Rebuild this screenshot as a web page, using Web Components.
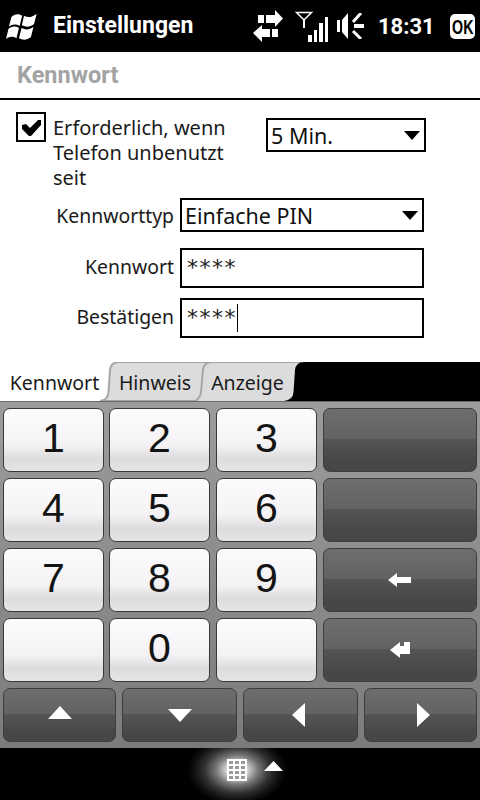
<!DOCTYPE html>
<html lang="de"><head><meta charset="utf-8"><title>Einstellungen</title>
<style>
html,body{margin:0;padding:0;background:#fff}
body{width:480px;height:800px;overflow:hidden;font-family:"Noto Sans","Open Sans","Liberation Sans",sans-serif;display:flex;flex-direction:column}
</style></head><body>
<wm-header></wm-header>
<wm-subhead>Kennwort</wm-subhead>
<wm-form></wm-form>
<wm-tabs></wm-tabs>
<wm-keypad></wm-keypad>
<wm-softbar></wm-softbar>
<script>
function def(name,css,html){
  customElements.define(name,class extends HTMLElement{
    constructor(){super();const s=this.attachShadow({mode:'open'});s.innerHTML='<style>'+css+'</style>'+html;}
  });
}
def('wm-header',`
:host{display:flex;align-items:center;height:52px;background:#000;color:#fff;flex:none}
.flag{margin:2px 0 0 6px;width:31px;height:28px;flex:none}
.t{margin-left:16px;font:700 23px/26px Roboto,sans-serif;flex:1}
.ic{flex:none;display:block}
.time{font:700 22px/26px Roboto,sans-serif;margin:1px 0 0 14px;width:57px;flex:none;white-space:nowrap}
.ok{flex:none;width:25px;height:25px;margin:0 5px 0 15px;border-radius:5px;background:#fff;display:flex;align-items:center;justify-content:center;overflow:hidden}
.ok b{display:block;color:#000;font:700 21px/25px "Liberation Sans",sans-serif;transform:scaleX(.68);white-space:nowrap}
`,`
<svg class="flag" viewBox="2.700 7 24.600 20.500" preserveAspectRatio="none"><g fill="#fff">
<path d="M7 10 C10 7.500 12 7.500 15.500 9 L13.500 16.500 C10.500 15 8 15 5 17Z"/>
<path d="M17 9 C20 10.500 23 10.500 27 7.500 L25 15 C21.500 17.500 19 17.500 15.300 16Z"/>
<path d="M4.700 18.500 C8 16.500 10 16.500 13 18 L11 25.500 C8 24 5.500 24 2.700 26Z"/>
<path d="M15 18 C18.500 19.500 21 19.500 24.500 17 L22.500 24.500 C19 27 16.500 27 13 25.500Z"/>
</g></svg>
<span class="t">Einstellungen</span>
<svg class="ic" width="30" height="32" viewBox="0 0 30 32" fill="#fff"><path d="M5 5h6v8H5zM13 5h9V0l8 8.500-8 8.500v-4h-9z"/><path d="M0 23l9-8v4h8v8H9v5z"/><path d="M19 19h6v8h-6z"/></svg>
<svg class="ic" width="33" height="31" style="margin-left:12px" viewBox="0 0 33 31"><path d="M1.500 1.500h15L9 9z" fill="none" stroke="#fff" stroke-width="1.500"/><rect x="8" y="8" width="2" height="9" fill="#fff"/><g fill="#fff" shape-rendering="crispEdges"><rect x="13" y="24" width="4" height="7"/><rect x="19" y="19" width="3" height="12"/><rect x="24" y="12" width="4" height="19"/><rect x="30" y="6" width="3" height="25"/></g></svg>
<svg class="ic" width="27" height="26" style="margin-left:9px" viewBox="0 0 27 26" fill="#fff"><rect x="0" y="7" width="3" height="12"/><path d="M5 7L11 0V26L5 19Z"/><rect x="17" y="11" width="10" height="4"/><path d="M16 9L24 0" stroke="#fff" stroke-width="3"/><path d="M16 18L24 26" stroke="#fff" stroke-width="3"/></svg>
<span class="time">18:31</span>
<span class="ok"><b>OK</b></span>`);
def('wm-subhead',`
:host{display:block;flex:none;height:46px;border-bottom:2px solid #000;color:#a3a3a3;font:700 23.500px/46px Roboto,sans-serif;padding-left:17px}
`,`<slot></slot>`);
def('wm-select',`
:host{display:flex;align-items:center;justify-content:space-between;box-sizing:border-box;height:34px;border:2px solid #000;padding:0 4px 0 3px;font-size:21.500px;color:#111;background:#fff}
i{display:block;width:0;height:0;border:8.500px solid transparent;border-top:9px solid #000;border-bottom:0}
`,`<span><slot></slot></span><i></i>`);
def('wm-input',`
:host{display:block;box-sizing:border-box;height:40px;border:2px solid #000;padding:5px 5px 0;font:22px/26px "DejaVu Sans",sans-serif;color:#222;background:#fff}
span{display:inline-block;position:relative;letter-spacing:1.500px}
:host([caret]) span::after{content:"";position:absolute;right:-1px;top:-1px;width:1px;height:28px;background:#000}
`,`<span><slot></slot></span>`);
def('wm-form',`
:host{display:flex;flex-direction:column;flex:none;height:262px;box-sizing:border-box;padding-top:12px;font-size:20px;color:#1a1a1a}
.top{display:flex;height:86px}
.cb{flex:none;box-sizing:border-box;width:30px;height:30px;border:2px solid #000;margin-left:16px;display:block}
.txt{flex:none;width:200px;margin:3px 0 0 7px;line-height:25px}
.top wm-select{flex:none;width:160px;margin:6px 0 0 13px}
.grid{display:grid;grid-template-columns:174px 244px;column-gap:6px;align-items:center;grid-template-rows:34px 56px 50px}
.lab{text-align:right;font-size:19.400px}
.grid wm-input{align-self:end}
.grid .lab.r{align-self:end;line-height:38px;margin-bottom:2px}
`,`
<div class="top">
<svg class="cb" viewBox="0 0 26 26"><path d="M4 11L8 10L12 14L20 6L23 6L23 11L13 22L11 22L4 15Z" fill="#000"/></svg>
<div class="txt">Erforderlich, wenn<br>Telefon unbenutzt<br>seit</div>
<wm-select>5 Min.</wm-select>
</div>
<div class="grid">
<div class="lab">Kennworttyp</div><wm-select>Einfache PIN</wm-select>
<div class="lab r">Kennwort</div><wm-input>****</wm-input>
<div class="lab r">Bestätigen</div><wm-input caret>****</wm-input>
</div>`);
def('wm-tabs',`
:host{display:flex;flex:none;height:39px;background:#fff;font-size:19.500px;color:#1a1a1a;position:relative;overflow:hidden}
svg{position:absolute;left:0;top:0}
div{position:relative;height:39px;line-height:41px;flex:none;text-align:center}
.a{width:109px}.b{width:92px}.c{width:93px}
`,`<svg width="480" height="39" viewBox="0 0 480 39">
<path d="M100 39Q108 38 108.500 30L110 8Q111 0 119 0H300V39Z" fill="#dcdcdc" stroke="#a6a6a6" stroke-width="2"/>
<path d="M191 41Q200 38 201 30L203 8Q204 0 212 0H300V41Z" fill="#dcdcdc" stroke="#a6a6a6" stroke-width="2"/>
<path d="M284 39Q293 38 293.500 30L295 8Q296 0 304 0H480V39Z" fill="#000"/>
</svg><div class="a">Kennwort</div><div class="b">Hinweis</div><div class="c">Anzeige</div>`);
def('wm-key',`
:host{display:flex;align-items:center;justify-content:center;box-sizing:border-box;border:1px solid #3a383a;border-radius:7px;padding-bottom:3px;font:41px/1 "Liberation Sans",sans-serif;color:#141414;
background:linear-gradient(#fdfbfd 0%,#f4f2f4 58%,#dddbdd 80%,#e6e4e6 100%)}
:host([dark]){padding-bottom:0;border-color:#3e3c3e;background:linear-gradient(#6f6d70 0%,#636164 49%,#555355 49%,#484648 85%,#474547 100%)}
:host([wide]){margin-left:-1px}
::slotted(svg){display:block}
`,`<slot></slot>`);
def('wm-keypad',`
:host{display:flex;flex-direction:column;flex:none;height:347px;box-sizing:border-box;padding:6px 3px;gap:6px;background:linear-gradient(#9d9b9d,#7c7a7c);border-top:1px solid #6a686a}
.g{display:grid;grid-template-columns:101px 100px 101px 154px;grid-auto-rows:64px;gap:6px}
.b{display:grid;grid-template-columns:113px 115px 115px 113px;grid-template-rows:54px;gap:6px}
`,`
<div class="g">
<wm-key>1</wm-key><wm-key wide>2</wm-key><wm-key>3</wm-key><wm-key dark></wm-key>
<wm-key>4</wm-key><wm-key wide>5</wm-key><wm-key>6</wm-key><wm-key dark></wm-key>
<wm-key>7</wm-key><wm-key wide>8</wm-key><wm-key>9</wm-key>
<wm-key dark><svg width="23" height="14" viewBox="0 0 23 14" fill="#fff" style="margin-left:-2px"><path d="M0 7l9-7v4h14v6H9v4z"/></svg></wm-key>
<wm-key></wm-key><wm-key wide>0</wm-key><wm-key></wm-key>
<wm-key dark><svg width="20" height="16" viewBox="0 0 20 16" fill="#fff"><path d="M0 8L10 0V4H14V0H20V12H10V16Z"/></svg></wm-key>
</div>
<div class="b">
<wm-key dark><svg width="24" height="13" viewBox="0 0 24 13" fill="#fff" style="margin-top:-5px"><path d="M12 0l12 13H0z"/></svg></wm-key>
<wm-key dark><svg width="24" height="13" viewBox="0 0 24 13" fill="#fff"><path d="M12 13L0 0h24z"/></svg></wm-key>
<wm-key dark><svg width="13" height="24" viewBox="0 0 13 24" fill="#fff" style="margin-left:-4px"><path d="M0 12L13 0v24z"/></svg></wm-key>
<wm-key dark><svg width="13" height="24" viewBox="0 0 13 24" fill="#fff" style="margin-left:6px"><path d="M13 12L0 0v24z"/></svg></wm-key>
</div>`);
def('wm-softbar',`
:host{display:flex;align-items:flex-start;flex:none;height:52px;box-sizing:border-box;padding:11px 0 0 227px;background:#000;position:relative;overflow:hidden}
.glow{position:absolute;left:187px;top:-13px;width:100px;height:70px;background:radial-gradient(closest-side,#fff 0%,#d8d8d8 20%,#777 42%,#333 65%,#111 85%,#000 100%)}
svg{position:relative;display:block;flex:none}
`,`<div class="glow"></div>
<svg width="20" height="22" viewBox="0 0 20 22" shape-rendering="crispEdges"><rect width="20" height="22" fill="#fff"/><g fill="#9a9a9a"><rect x="2" y="2" width="4" height="3"/><rect x="8" y="2" width="4" height="3"/><rect x="14" y="2" width="4" height="3"/><rect x="2" y="7" width="4" height="3"/><rect x="8" y="7" width="4" height="3"/><rect x="14" y="7" width="4" height="3"/><rect x="2" y="12" width="4" height="3"/><rect x="8" y="12" width="4" height="3"/><rect x="14" y="12" width="4" height="3"/><rect x="2" y="17" width="4" height="3"/><rect x="8" y="17" width="4" height="3"/><rect x="14" y="17" width="4" height="3"/></g></svg>
<svg width="19" height="10" viewBox="0 0 19 10" style="margin:2px 0 0 17px" fill="#fff"><path d="M9.500 0L19 10H0z"/></svg>`);
</script>
</body></html>
